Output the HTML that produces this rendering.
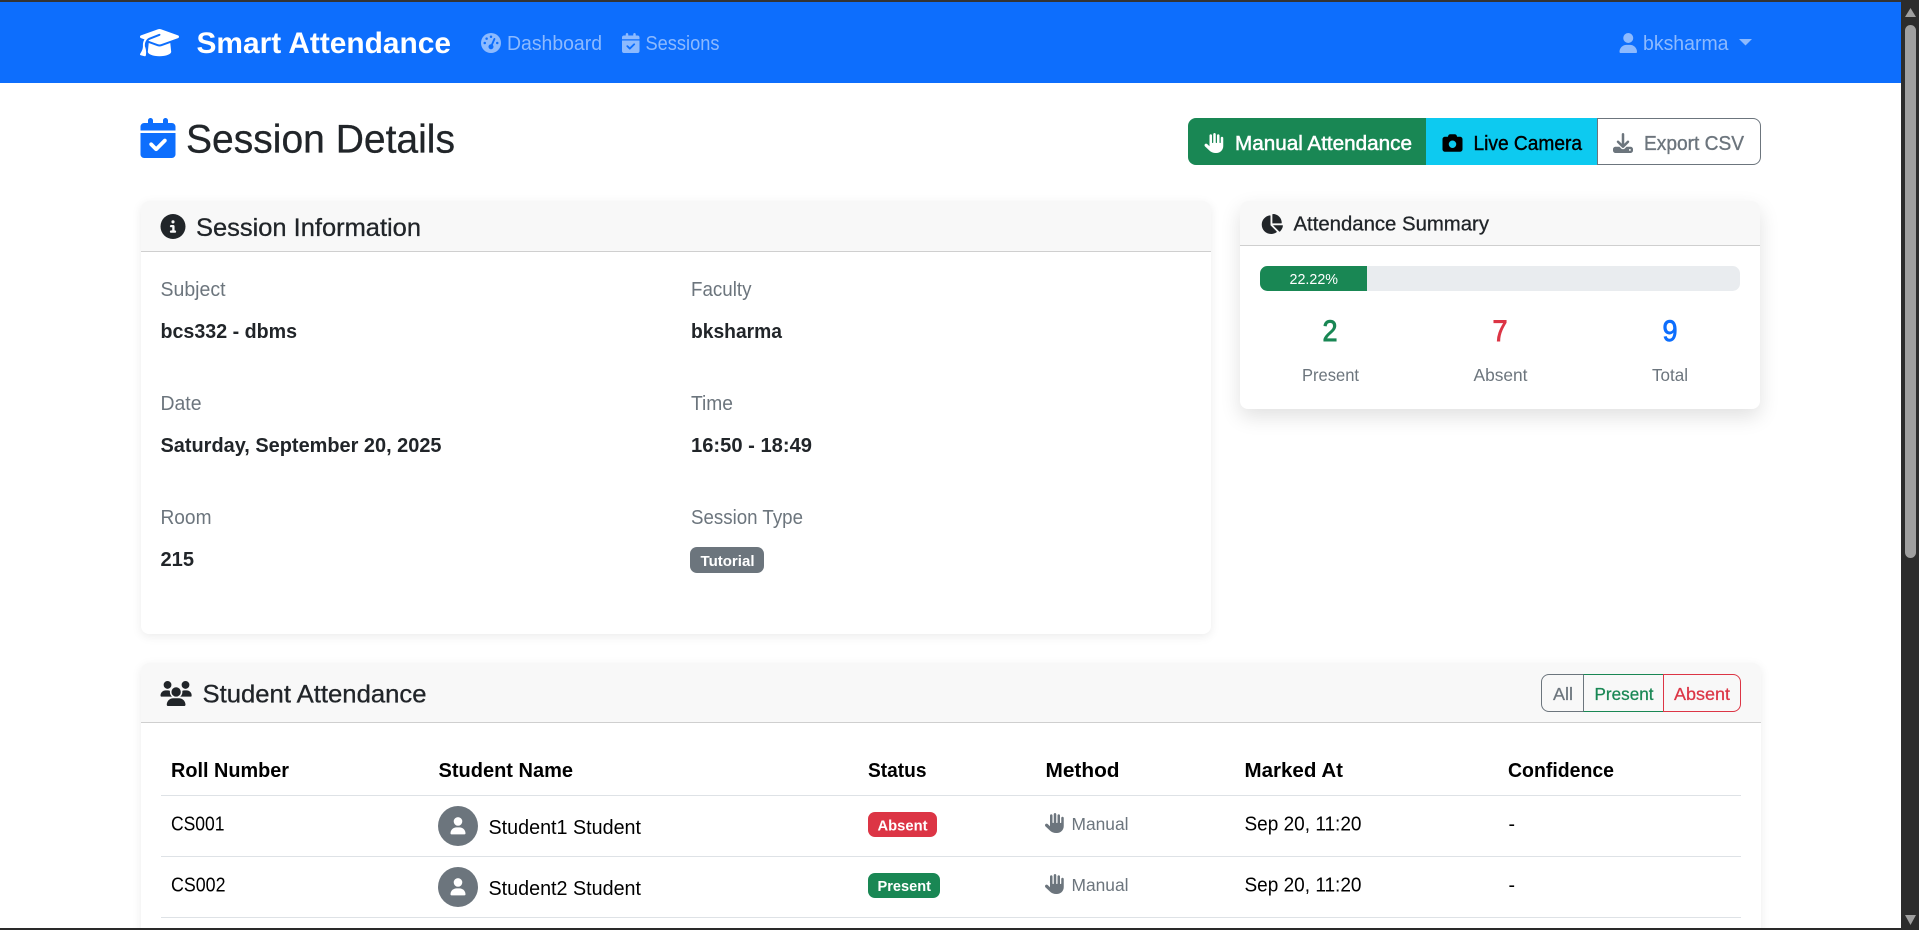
<!DOCTYPE html>
<html lang="en">
<head>
<meta charset="utf-8">
<title>Session Details - Smart Attendance</title>
<style>
html,body{margin:0;padding:0;background:#fff;width:1919px;height:930px;overflow:hidden}
#page{position:absolute;left:0;top:0;width:1919px;height:930px;overflow:hidden;background:#fff}
.b{position:absolute;box-sizing:border-box}
.card{background:#fff;border-radius:8px;overflow:hidden;box-shadow:0 2.5px 10px rgba(0,0,0,.08)}
.ch{position:absolute;left:0;right:0;top:0;background:#f8f8f8;border-bottom:1px solid #cfcfcf}
svg.t{position:absolute;left:0;top:0}
text{font-family:"Liberation Sans",Arial,sans-serif;fill:#212529}
.bd{font-weight:bold}
.mu{fill:#6c757d}
.nv{fill:#8dbafe;font-size:20px}
.hd{stroke:#212529;stroke-width:.3px}
.ln{height:1px;background:#dee2e6;left:161px;width:1580px}
</style>
</head>
<body>
<div id="page">
<!-- navbar -->
<div class="b" style="left:0;top:2px;width:1901px;height:81px;background:#0d6efd"></div>
<div class="b" style="left:0;top:0;width:1919px;height:2px;background:#333"></div>

<!-- header buttons -->
<div class="b" style="left:1188px;top:118px;width:238px;height:47px;border-radius:8px 0 0 8px;background:#198754"></div>
<div class="b" style="left:1426px;top:118px;width:172px;height:47px;background:#0dcaf0"></div>
<div class="b" style="left:1597px;top:118px;width:164px;height:47px;border-radius:0 8px 8px 0;background:#fff;border:1px solid #6c757d"></div>

<!-- session info card -->
<div class="b card" style="left:140.5px;top:201px;width:1070px;height:433px">
  <div class="ch" style="height:50px"></div>
</div>
<!-- summary card -->
<div class="b card" style="left:1240px;top:201px;width:520px;height:208px;box-shadow:0 8px 20px rgba(0,0,0,.12)">
  <div class="ch" style="height:44px"></div>
</div>
<div class="b" style="left:1260px;top:266px;width:480px;height:25px;background:#e9ecef;border-radius:7.5px;overflow:hidden">
  <div class="b" style="left:0;top:0;width:107px;height:25px;background:#198754"></div>
</div>
<div class="b" style="left:690px;top:547px;width:74px;height:26px;background:#6c757d;border-radius:7px"></div>

<!-- student card -->
<div class="b card" style="left:140.5px;top:663px;width:1620.5px;height:300px">
  <div class="ch" style="height:59px"></div>
</div>
<div class="b" style="left:1541px;top:674px;width:43px;height:38px;border-radius:8px 0 0 8px;border:1px solid #6c757d"></div>
<div class="b" style="left:1583px;top:674px;width:81px;height:38px;border:1px solid #198754;border-left-color:#6c757d"></div>
<div class="b" style="left:1663px;top:674px;width:78px;height:38px;border-radius:0 8px 8px 0;border:1px solid #dc3545"></div>

<!-- table lines -->
<div class="b ln" style="top:795px"></div>
<div class="b ln" style="top:856px"></div>
<div class="b ln" style="top:917px"></div>

<!-- badges, avatars -->
<div class="b" style="left:868px;top:812px;width:69px;height:25px;background:#dc3545;border-radius:7px"></div>
<div class="b" style="left:868px;top:873px;width:72px;height:25px;background:#198754;border-radius:7px"></div>
<div class="b" style="left:438px;top:806px;width:40px;height:40px;background:#6c757d;border-radius:50%"></div>
<div class="b" style="left:438px;top:867px;width:40px;height:40px;background:#6c757d;border-radius:50%"></div>
<div class="b" style="left:438px;top:928px;width:40px;height:40px;background:#6c757d;border-radius:50%"></div>

<!-- text + icons -->
<svg class="t" width="1919" height="930" viewBox="0 0 1919 930" xmlns="http://www.w3.org/2000/svg">
<defs>
<symbol id="cap" viewBox="0 0 640 512"><path d="M320 32c-8.1 0-16.1 1.4-23.7 4.1L15.8 137.4C6.3 140.9 0 149.9 0 160s6.3 19.1 15.8 22.6l57.9 20.9C57.3 229.3 48 259.8 48 291.9v28.1c0 28.4-10.8 57.7-22.3 80.8c-6.5 13-13.9 25.8-22.5 37.6C0 442.7-.9 448.3 .9 453.4s6 8.9 11.2 10.2l64 16c4.2 1.1 8.7 .3 12.4-2s6.3-6.1 7.1-10.4c8.6-42.8 4.3-81.2-2.1-108.7C90.3 344.3 86 329.8 80 316.5V291.9c0-30.2 10.2-58.7 27.9-81.5c12.9-15.5 29.6-28 49.2-35.7l157-61.7c8.2-3.2 17.5 .8 20.7 9s-.8 17.5-9 20.7l-157 61.7c-12.4 4.9-23.3 12.4-32.2 21.6l159.6 57.6c7.6 2.7 15.6 4.1 23.7 4.1s16.1-1.4 23.7-4.1L624.2 182.6c9.5-3.4 15.8-12.5 15.8-22.6s-6.3-19.1-15.8-22.6L343.7 36.1C336.1 33.4 328.1 32 320 32zM128 408c0 35.3 86 72 192 72s192-36.7 192-72L496.7 262.6 354.5 314c-11.1 4-22.8 6-34.5 6s-23.5-2-34.5-6L143.3 262.6 128 408z"/></symbol>
<symbol id="gauge" viewBox="0 0 512 512"><path d="M0 256a256 256 0 1 1 512 0A256 256 0 1 1 0 256zM288 96a32 32 0 1 0 -64 0 32 32 0 1 0 64 0zM256 416c35.3 0 64-28.7 64-64c0-17.4-6.9-33.1-18.1-44.6L366 161.7c5.3-12.1-.2-26.3-12.3-31.6s-26.3 .2-31.6 12.3L257.9 288c-.6 0-1.3 0-1.9 0c-35.3 0-64 28.7-64 64s28.7 64 64 64zM176 144a32 32 0 1 0 -64 0 32 32 0 1 0 64 0zM96 288a32 32 0 1 0 0-64 32 32 0 1 0 0 64zm352-32a32 32 0 1 0 -64 0 32 32 0 1 0 64 0z"/></symbol>
<symbol id="cal" viewBox="0 0 448 512"><path d="M128 0c17.7 0 32 14.3 32 32V64H288V32c0-17.7 14.3-32 32-32s32 14.3 32 32V64h48c26.5 0 48 21.5 48 48v48H0V112C0 85.5 21.5 64 48 64H96V32c0-17.7 14.3-32 32-32zM0 192H448V464c0 26.5-21.5 48-48 48H48c-26.5 0-48-21.5-48-48V192zM329 305c9.4-9.4 9.4-24.6 0-33.9s-24.6-9.4-33.9 0l-95 95-47-47c-9.4-9.4-24.6-9.4-33.9 0s-9.4 24.6 0 33.9l64 64c9.4 9.4 24.6 9.4 33.9 0L329 305z"/></symbol>
<symbol id="user" viewBox="0 0 448 512"><path d="M224 256A128 128 0 1 0 224 0a128 128 0 1 0 0 256zm-45.7 48C79.8 304 0 383.8 0 482.3C0 498.7 13.3 512 29.7 512H418.3c16.4 0 29.7-13.3 29.7-29.7C448 383.8 368.2 304 269.7 304H178.3z"/></symbol>
<symbol id="hand" viewBox="0 0 512 512"><path d="M288 32c0-17.7-14.3-32-32-32s-32 14.3-32 32V240c0 8.8-7.2 16-16 16s-16-7.2-16-16V64c0-17.7-14.3-32-32-32s-32 14.3-32 32V336c0 1.5 0 3.1 .1 4.6L67.6 283c-16-15.2-41.3-14.6-56.6 1.4s-14.6 41.3 1.4 56.6L124.8 448c43.1 41.1 100.4 64 160 64H304c97.2 0 176-78.8 176-176V128c0-17.7-14.3-32-32-32s-32 14.3-32 32V240c0 8.8-7.2 16-16 16s-16-7.2-16-16V64c0-17.7-14.3-32-32-32s-32 14.3-32 32V240c0 8.8-7.2 16-16 16s-16-7.2-16-16V32z"/></symbol>
<symbol id="camera" viewBox="0 0 512 512"><path d="M149.1 64.8L138.7 96H64C28.7 96 0 124.7 0 160V416c0 35.3 28.7 64 64 64H448c35.3 0 64-28.7 64-64V160c0-35.3-28.7-64-64-64H373.3L362.9 64.8C356.4 45.2 338.1 32 317.4 32H194.6c-20.7 0-39 13.2-45.5 32.8zM256 192a96 96 0 1 1 0 192 96 96 0 1 1 0-192z"/></symbol>
<symbol id="dl" viewBox="0 0 512 512"><path d="M288 32c0-17.7-14.3-32-32-32s-32 14.3-32 32V274.7l-73.4-73.4c-12.5-12.5-32.8-12.5-45.3 0s-12.5 32.8 0 45.3l128 128c12.5 12.5 32.8 12.5 45.3 0l128-128c12.5-12.5 12.5-32.8 0-45.3s-32.8-12.5-45.3 0L288 274.7V32zM64 352c-35.3 0-64 28.7-64 64v32c0 35.3 28.7 64 64 64H448c35.3 0 64-28.7 64-64V416c0-35.3-28.7-64-64-64H346.5l-45.3 45.3c-25 25-65.5 25-90.5 0L165.5 352H64zm368 56a24 24 0 1 1 0 48 24 24 0 1 1 0-48z"/></symbol>
<symbol id="info" viewBox="0 0 512 512"><path d="M256 512A256 256 0 1 0 256 0a256 256 0 1 0 0 512zM216 336h24V272H216c-13.3 0-24-10.7-24-24s10.7-24 24-24h48c13.3 0 24 10.7 24 24v88h8c13.3 0 24 10.7 24 24s-10.7 24-24 24H216c-13.3 0-24-10.7-24-24s10.7-24 24-24zm40-208a32 32 0 1 1 0 64 32 32 0 1 1 0-64z"/></symbol>
<symbol id="pie" viewBox="0 0 576 512"><path d="M304 240V16.6c0-9 7-16.6 16-16.6C443.7 0 544 100.3 544 224c0 9-7.6 16-16.6 16H304zM32 272C32 150.7 122.1 50.3 239 34.3c9.2-1.3 17 6.1 17 15.4V288L412.5 444.5c6.7 6.7 6.2 17.7-1.5 23.1C371.8 495.6 323.8 512 272 512C139.5 512 32 404.6 32 272zm526.4 16c9.3 0 16.6 7.8 15.4 17c-7.7 55.9-34.6 105.6-73.9 142.3c-6 5.6-15.4 5.2-21.2-.7L320 288H558.4z"/></symbol>
<symbol id="users" viewBox="0 0 640 512"><path d="M144 0a80 80 0 1 1 0 160A80 80 0 1 1 144 0zM512 0a80 80 0 1 1 0 160A80 80 0 1 1 512 0zM0 298.7C0 239.8 47.8 192 106.7 192h42.7c15.9 0 31 3.5 44.6 9.7c-1.3 7.2-1.9 14.7-1.9 22.3c0 38.2 16.8 72.5 43.3 96c-.2 0-.4 0-.7 0H21.3C9.6 320 0 310.4 0 298.7zM405.3 320c-.2 0-.4 0-.7 0c26.6-23.5 43.3-57.8 43.3-96c0-7.6-.7-15-1.9-22.3c13.6-6.3 28.7-9.7 44.6-9.7h42.7C592.2 192 640 239.8 640 298.7c0 11.8-9.6 21.3-21.3 21.3H405.3zM224 224a96 96 0 1 1 192 0 96 96 0 1 1 -192 0zM128 485.3C128 411.7 187.7 352 261.3 352H378.7C452.3 352 512 411.7 512 485.3c0 14.7-11.9 26.7-26.7 26.7H154.7c-14.7 0-26.7-11.9-26.7-26.7z"/></symbol>
</defs>

<!-- navbar -->
<use href="#cap" x="140" y="27" width="39" height="31.200" fill="#fff"/>
<text x="196.500" y="53" font-size="30" class="bd" style="fill:#fff" textLength="254.500" lengthAdjust="spacingAndGlyphs">Smart Attendance</text>
<use href="#gauge" x="481" y="33" width="20" height="20" fill="#8dbafe"/>
<text x="507" y="50" class="nv" textLength="95" lengthAdjust="spacingAndGlyphs">Dashboard</text>
<use href="#cal" x="622" y="33" width="17.500" height="20" fill="#8dbafe"/>
<text x="645.500" y="50" class="nv" textLength="74" lengthAdjust="spacingAndGlyphs">Sessions</text>
<use href="#user" x="1619.500" y="33" width="17.500" height="20" fill="#8dbafe"/>
<text x="1643" y="50" class="nv" textLength="85.500" lengthAdjust="spacingAndGlyphs">bksharma</text>
<path d="M1739 39h13l-6.500 6.500z" fill="#8dbafe"/>

<!-- page title -->
<use href="#cal" x="140.500" y="118" width="35" height="40" fill="#0d6efd"/>
<text x="186" y="152.500" font-size="40" class="hd" textLength="269" lengthAdjust="spacingAndGlyphs">Session Details</text>

<!-- header buttons -->
<use href="#hand" x="1204.500" y="133" width="20" height="20" fill="#fff"/>
<text x="1235" y="150" font-size="20" style="fill:#fff;stroke:#fff;stroke-width:.5px" textLength="177" lengthAdjust="spacingAndGlyphs">Manual Attendance</text>
<use href="#camera" x="1442.500" y="133" width="20" height="20" fill="#000"/>
<text x="1473.500" y="150" font-size="20" style="fill:#000;stroke:#000;stroke-width:.4px" textLength="108.500" lengthAdjust="spacingAndGlyphs">Live Camera</text>
<use href="#dl" x="1613" y="133" width="20" height="20" fill="#6c757d"/>
<text x="1644" y="150" font-size="20" class="mu" style="stroke:#6c757d;stroke-width:.35px" textLength="100" lengthAdjust="spacingAndGlyphs">Export CSV</text>

<!-- session information -->
<use href="#info" x="160.500" y="214" width="25" height="25" fill="#212529"/>
<text x="196" y="236" font-size="25" class="hd" textLength="225" lengthAdjust="spacingAndGlyphs">Session Information</text>

<text x="160.500" y="296" font-size="20" class="mu" textLength="65" lengthAdjust="spacingAndGlyphs">Subject</text>
<text x="160.500" y="338" font-size="20" class="bd" textLength="136.500" lengthAdjust="spacingAndGlyphs">bcs332 - dbms</text>
<text x="691" y="296" font-size="20" class="mu" textLength="60.500" lengthAdjust="spacingAndGlyphs">Faculty</text>
<text x="691" y="338" font-size="20" class="bd" textLength="91" lengthAdjust="spacingAndGlyphs">bksharma</text>
<text x="160.500" y="410" font-size="20" class="mu" textLength="41" lengthAdjust="spacingAndGlyphs">Date</text>
<text x="160.500" y="452" font-size="20" class="bd" textLength="281" lengthAdjust="spacingAndGlyphs">Saturday, September 20, 2025</text>
<text x="691" y="410" font-size="20" class="mu" textLength="42" lengthAdjust="spacingAndGlyphs">Time</text>
<text x="691" y="452" font-size="20" class="bd" textLength="121" lengthAdjust="spacingAndGlyphs">16:50 - 18:49</text>
<text x="160.500" y="524" font-size="20" class="mu" textLength="51" lengthAdjust="spacingAndGlyphs">Room</text>
<text x="160.500" y="566" font-size="20" class="bd" textLength="33.500" lengthAdjust="spacingAndGlyphs">215</text>
<text x="691" y="524" font-size="20" class="mu" textLength="112" lengthAdjust="spacingAndGlyphs">Session Type</text>
<text x="700.500" y="566" font-size="15" class="bd" style="fill:#fff" textLength="54" lengthAdjust="spacingAndGlyphs">Tutorial</text>

<!-- summary -->
<use href="#pie" x="1260.500" y="214" width="22.500" height="20" fill="#212529"/>
<text x="1293.500" y="230.500" font-size="20" class="hd" textLength="195.500" lengthAdjust="spacingAndGlyphs">Attendance Summary</text>
<text x="1289.500" y="284" font-size="15" style="fill:#fff" textLength="48.500" lengthAdjust="spacingAndGlyphs">22.22%</text>
<text x="1322.500" y="341" font-size="30" style="fill:#198754;stroke:#198754;stroke-width:.9px" textLength="15" lengthAdjust="spacingAndGlyphs">2</text>
<text x="1492.500" y="341" font-size="30" style="fill:#dc3545;stroke:#dc3545;stroke-width:.9px" textLength="15" lengthAdjust="spacingAndGlyphs">7</text>
<text x="1662.500" y="341" font-size="30" style="fill:#0d6efd;stroke:#0d6efd;stroke-width:.9px" textLength="15" lengthAdjust="spacingAndGlyphs">9</text>
<text x="1302" y="381" font-size="17.500" class="mu" textLength="57" lengthAdjust="spacingAndGlyphs">Present</text>
<text x="1473.500" y="381" font-size="17.500" class="mu" textLength="54" lengthAdjust="spacingAndGlyphs">Absent</text>
<text x="1652" y="381" font-size="17.500" class="mu" textLength="36" lengthAdjust="spacingAndGlyphs">Total</text>

<!-- student attendance -->
<use href="#users" x="160.500" y="681" width="31.250" height="25" fill="#212529"/>
<text x="202.500" y="702.500" font-size="25" class="hd" textLength="224" lengthAdjust="spacingAndGlyphs">Student Attendance</text>
<text x="1553" y="700" font-size="17.500" class="mu" style="stroke:#6c757d;stroke-width:.25px" textLength="20" lengthAdjust="spacingAndGlyphs">All</text>
<text x="1594.500" y="700" font-size="17.500" style="fill:#198754;stroke:#198754;stroke-width:.25px" textLength="59" lengthAdjust="spacingAndGlyphs">Present</text>
<text x="1674" y="700" font-size="17.500" style="fill:#dc3545;stroke:#dc3545;stroke-width:.25px" textLength="56" lengthAdjust="spacingAndGlyphs">Absent</text>

<g class="bd">
<text x="171" y="777" font-size="20" style="fill:#000" textLength="118" lengthAdjust="spacingAndGlyphs">Roll Number</text>
<text x="438.500" y="777" font-size="20" style="fill:#000" textLength="134.500" lengthAdjust="spacingAndGlyphs">Student Name</text>
<text x="868" y="777" font-size="20" style="fill:#000" textLength="58.500" lengthAdjust="spacingAndGlyphs">Status</text>
<text x="1045.500" y="777" font-size="20" style="fill:#000" textLength="74" lengthAdjust="spacingAndGlyphs">Method</text>
<text x="1244.500" y="777" font-size="20" style="fill:#000" textLength="98.500" lengthAdjust="spacingAndGlyphs">Marked At</text>
<text x="1508" y="777" font-size="20" style="fill:#000" textLength="106" lengthAdjust="spacingAndGlyphs">Confidence</text>
</g>

<!-- row 1 -->
<text x="171" y="830.500" font-size="20" style="fill:#000" textLength="53.500" lengthAdjust="spacingAndGlyphs">CS001</text>
<use href="#user" x="450.500" y="817" width="15" height="17.500" fill="#fff"/>
<text x="488.500" y="834" font-size="20" style="fill:#000" textLength="152.500" lengthAdjust="spacingAndGlyphs">Student1 Student</text>
<text x="877.500" y="830.500" font-size="15" class="bd" style="fill:#fff" textLength="50" lengthAdjust="spacingAndGlyphs">Absent</text>
<use href="#hand" x="1045" y="813" width="20" height="20" fill="#6c757d"/>
<text x="1071.500" y="830" font-size="17.500" class="mu" textLength="57" lengthAdjust="spacingAndGlyphs">Manual</text>
<text x="1244.500" y="830.500" font-size="20" style="fill:#000" textLength="117" lengthAdjust="spacingAndGlyphs">Sep 20, 11:20</text>
<text x="1508.500" y="830.500" font-size="20" style="fill:#000" textLength="6.500" lengthAdjust="spacingAndGlyphs">-</text>

<!-- row 2 -->
<text x="171" y="891.500" font-size="20" style="fill:#000" textLength="54.500" lengthAdjust="spacingAndGlyphs">CS002</text>
<use href="#user" x="450.500" y="878" width="15" height="17.500" fill="#fff"/>
<text x="488.500" y="895" font-size="20" style="fill:#000" textLength="152.500" lengthAdjust="spacingAndGlyphs">Student2 Student</text>
<text x="877.500" y="891" font-size="15" class="bd" style="fill:#fff" textLength="53.500" lengthAdjust="spacingAndGlyphs">Present</text>
<use href="#hand" x="1045" y="874" width="20" height="20" fill="#6c757d"/>
<text x="1071.500" y="891" font-size="17.500" class="mu" textLength="57" lengthAdjust="spacingAndGlyphs">Manual</text>
<text x="1244.500" y="891.500" font-size="20" style="fill:#000" textLength="117" lengthAdjust="spacingAndGlyphs">Sep 20, 11:20</text>
<text x="1508.500" y="891.500" font-size="20" style="fill:#000" textLength="6.500" lengthAdjust="spacingAndGlyphs">-</text>
</svg>

<!-- window edges + scrollbar -->
<div class="b" style="left:0;top:928px;width:1919px;height:2px;background:#2a2a2a"></div>
<div class="b" style="left:1901px;top:0;width:18px;height:930px;background:#2c2c2c">
  <div class="b" style="left:4px;top:25px;width:11px;height:533px;background:#9f9f9f;border-radius:6px"></div>
</div>
<svg class="t" width="1919" height="930">
  <path d="M1910.500 8l5.500 9h-11z" fill="#9f9f9f"/>
  <path d="M1905 915h11l-5.500 10z" fill="#9f9f9f"/>
</svg>
</div>
</body>
</html>
